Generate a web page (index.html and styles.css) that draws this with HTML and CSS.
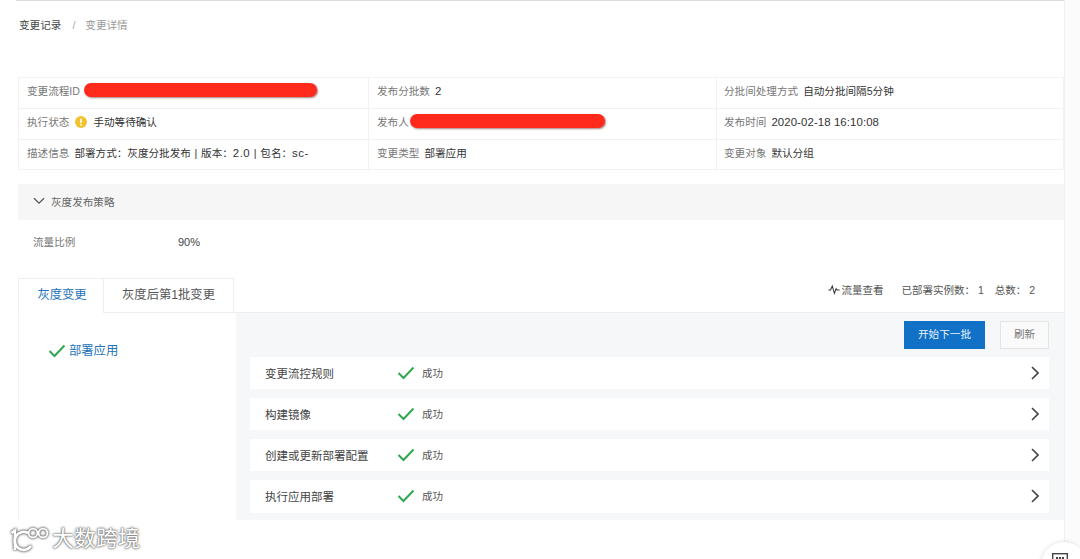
FILE: index.html
```html
<!DOCTYPE html>
<html lang="zh-CN">
<head>
<meta charset="utf-8">
<title>变更详情</title>
<link rel="stylesheet" href="styles.css">
</head>
<body>
<main class="page">
  <nav class="crumbs"><span class="crumb-link">变更记录</span><span class="crumb-sep">/</span><span class="crumb-current">变更详情</span></nav>
  <section class="info">
    <div class="cell"><span class="label">变更流程ID</span><span class="redact redact-id"></span></div>
    <div class="cell"><span class="label">发布分批数</span><span class="value num">2</span></div>
    <div class="cell"><span class="label">分批间处理方式</span><span class="value">自动分批间隔5分钟</span></div>
    <div class="cell"><span class="label">执行状态</span><svg class="warn" viewBox="0 0 12 12"><circle cx="6" cy="6" r="6" fill="#f2c230"/><rect x="5.2" y="2.6" width="1.6" height="4.4" fill="#fff"/><rect x="5.2" y="8" width="1.6" height="1.6" fill="#fff"/></svg><span class="value">手动等待确认</span></div>
    <div class="cell"><span class="label">发布人</span><span class="redact redact-user"></span></div>
    <div class="cell"><span class="label">发布时间</span><span class="value num">2020-02-18 16:10:08</span></div>
    <div class="cell"><span class="label">描述信息</span><span class="value desc">部署方式：灰度分批发布 | 版本：<span class="ver">2.0</span> | 包名：<span class="ver">sc-</span></span></div>
    <div class="cell"><span class="label">变更类型</span><span class="value">部署应用</span></div>
    <div class="cell"><span class="label">变更对象</span><span class="value">默认分组</span></div>
  </section>
  <section class="strategy">
    <header class="strategy-head"><svg class="chev-down" viewBox="0 0 12 8"><path d="M1 1.2 6 6.2 11 1.2" fill="none" stroke="#555" stroke-width="1.3"/></svg><span>灰度发布策略</span></header>
    <div class="strategy-row"><span class="strategy-label">流量比例</span><span class="strategy-value">90%</span></div>
  </section>
  <section class="changes">
    <div class="tabbar">
      <div class="tab tab-active">灰度变更</div>
      <div class="tab tab-second">灰度后第1批变更</div>
      <div class="stats">
        <svg class="pulse" viewBox="0 0 14 12"><path d="M0.5 6.5H3L5 2 7.5 10.5 9.5 5 10.5 6.5H13.5" fill="none" stroke="#333" stroke-width="1.2"/></svg>
        <span class="traffic">流量查看</span>
        <span class="stat">已部署实例数：&nbsp;1</span>
        <span class="stat">总数：&nbsp;2</span>
      </div>
    </div>
    <div class="body">
      <aside class="steps">
        <svg class="check check-step" viewBox="0 0 18 14"><path d="M1.5 7 6.5 12 16.5 1.5" fill="none" stroke="#2fa84f" stroke-width="2"/></svg>
        <span class="step-name">部署应用</span>
      </aside>
      <div class="detail">
        <div class="actions"><button class="btn-primary">开始下一批</button><button class="btn-plain">刷新</button></div>
        <div class="task"><span class="task-name">变更流控规则</span><svg class="check" viewBox="0 0 18 14"><path d="M1.5 7 6.5 12 16.5 1.5" fill="none" stroke="#2fa84f" stroke-width="2"/></svg><span class="task-status">成功</span><svg class="chev" viewBox="0 0 8 14"><path d="M1 1 7 7 1 13" fill="none" stroke="#444" stroke-width="1.6"/></svg></div>
        <div class="task"><span class="task-name">构建镜像</span><svg class="check" viewBox="0 0 18 14"><path d="M1.5 7 6.5 12 16.5 1.5" fill="none" stroke="#2fa84f" stroke-width="2"/></svg><span class="task-status">成功</span><svg class="chev" viewBox="0 0 8 14"><path d="M1 1 7 7 1 13" fill="none" stroke="#444" stroke-width="1.6"/></svg></div>
        <div class="task"><span class="task-name">创建或更新部署配置</span><svg class="check" viewBox="0 0 18 14"><path d="M1.5 7 6.5 12 16.5 1.5" fill="none" stroke="#2fa84f" stroke-width="2"/></svg><span class="task-status">成功</span><svg class="chev" viewBox="0 0 8 14"><path d="M1 1 7 7 1 13" fill="none" stroke="#444" stroke-width="1.6"/></svg></div>
        <div class="task task-last"><span class="task-name">执行应用部署</span><svg class="check" viewBox="0 0 18 14"><path d="M1.5 7 6.5 12 16.5 1.5" fill="none" stroke="#2fa84f" stroke-width="2"/></svg><span class="task-status">成功</span><svg class="chev" viewBox="0 0 8 14"><path d="M1 1 7 7 1 13" fill="none" stroke="#444" stroke-width="1.6"/></svg></div>
      </div>
    </div>
  </section>
</main>
<div class="edge"></div>
<div class="watermark">
  <svg class="wm-logo" viewBox="0 0 40 26"><g fill="none" stroke="#fff" stroke-width="2.6"><path d="M2.5 7 6 4.5V24"/><path d="M22 20A9 9 0 1 1 19 7"/></g><g fill="#fff" stroke="#fff" stroke-width="1.8" fill-opacity="0"><circle cx="24" cy="7" r="4.4"/><circle cx="34" cy="7" r="4.4"/></g></svg>
  <span>大数跨境</span>
</div>
<div class="chat-clip"><div class="chat"><svg class="chat-icon" viewBox="0 0 16 12"><rect x="0.7" y="0.7" width="14.6" height="14" fill="#fff" stroke="#444" stroke-width="1.4"/><rect x="4" y="4" width="2" height="2" fill="#444"/><rect x="7" y="4" width="2" height="2" fill="#444"/><rect x="10" y="4" width="2" height="2" fill="#444"/></svg></div></div>
</body>
</html>
```
FILE: styles.css
```css
* { box-sizing: border-box; }
html, body { margin: 0; height: 559px; overflow: hidden; background: #fff; }
body {
  position: relative;
  font-family: "Liberation Sans", "Noto Sans CJK SC", sans-serif;
  font-size: 10.6px;
  color: #333;
}
.page {
  width: 1064px;
  padding-left: 18px;
  height: 559px;
  overflow: hidden;
  display: flex;
  flex-direction: column;
}
.page::before {
  content: "";
  display: block;
  flex: none;
  height: 1px;
  margin-left: -2px;
  background: #dcdcdc;
}
.crumbs { margin-top: 17px; height: 14px; line-height: 14px; display: flex; padding-left: 1px; }
.crumb-link { color: #444; }
.crumb-sep { margin: 0 10px 0 11px; color: #aaa; }
.crumb-current { color: #999; }
.info {
  margin-top: 45px;
  display: grid;
  grid-template-columns: 350px 348px 348px;
  grid-auto-rows: 31px;
  border: 1px solid #f2f2f2;
  height: 93px;
  width: 1046px;
  flex: none;
}
.cell {
  display: flex;
  align-items: center;
  padding: 0 0 6px 8px;
  border-right: 1px solid #f2f2f2;
  border-bottom: 1px solid #eff1f3;
  white-space: nowrap;
}
.cell:nth-child(3n) { border-right: 0; padding-left: 7px; }
.cell:nth-child(n+7) { border-bottom-color: transparent; }
.label { color: #777; margin-right: 5px; }
.value { color: #333; }
.desc { word-spacing: .75px; }
.num { font-size: 11.4px; letter-spacing: .1px; margin-top: 2px; }
.ver { font-size: 11.4px; letter-spacing: .5px; }
.warn { width: 12px; height: 12px; margin: 2px 6px 0 1px; }
.redact {
  display: block;
  height: 14px;
  background: #ff2a1c;
  border-radius: 7px;
  box-shadow: 1px 1px 2px rgba(90,30,20,.55);
}
.redact-id { width: 233px; margin-left: -1px; }
.redact-user { width: 195px; margin-left: -4px; }
.strategy { margin-top: 14px; width: 1046px; flex: none; }
.strategy-head {
  height: 36px;
  background: #f6f6f6;
  display: flex;
  align-items: center;
  padding: 0 0 2px 15px;
  color: #666;
}
.chev-down { width: 12px; height: 8px; margin-right: 6px; }
.strategy-row { margin-top: 15px; padding-left: 15px; height: 14px; line-height: 14px; display: flex; }
.strategy-label { width: 145px; color: #777; }
.strategy-value { color: #444; font-size: 11px; }
.changes { margin-top: 29px; width: 1046px; flex: none; }
.tabbar { height: 35px; display: flex; border-bottom: 1px solid #eceef0; }
.tab {
  height: 35px;
  display: flex;
  align-items: center;
  justify-content: center;
  padding-bottom: 4px;
  font-size: 12.3px;
  border: 1px solid #eeeeee;
  border-bottom: 0;
}
.tab-active { width: 85px; color: #2272b9; background: #fff; border-right: 0; padding-left: 2px; }
.tab-second { width: 131px; color: #555; }
.stats { margin-left: auto; display: flex; align-items: center; padding: 0 29px 12px 0; color: #555; font-size: 10.5px; }
.pulse { width: 12px; height: 11px; margin-right: 1px; }
.traffic { margin-right: 18px; }
.stat { margin-right: 11px; }
.stat:last-child { margin-right: 0; }
.body { display: flex; height: 207px; }
.steps {
  width: 218px;
  display: flex;
  align-items: flex-start;
  padding: 31px 0 0 29px;
  border-left: 1px solid #f2f2f2;
  color: #2272b9;
  font-size: 12.3px;
}
.step-name { line-height: 14px; }
.check-step { margin: 0 3px 0 0; }
.detail { flex: 1; background: #f6f7f9; padding: 8px 15px 0 14px; }
.actions { display: flex; justify-content: flex-end; gap: 15px; height: 28px; margin-bottom: 8px; }
.actions button { font: inherit; padding: 0 0 4px; height: 28px; }
.btn-primary { width: 81px; background: #1171c6; color: #e9f2fb; border: 0; }
.btn-plain { width: 49px; background: #fafafa; color: #777; border: 1px solid #e4e4e4; }
.task {
  height: 32px;
  margin-bottom: 9px;
  background: #fff;
  display: flex;
  align-items: center;
  padding: 0 10px 0 15px;
  color: #444;
}
.task-last { height: 33px; margin-bottom: 0; padding-bottom: 1px; }
.task-name { width: 132px; font-size: 11.5px; }
.check { width: 18px; height: 14px; flex: none; }
.task-status { margin: 0 0 2px 7px; color: #555; font-size: 10.5px; }
.chev { width: 8px; height: 14px; margin-left: auto; }
.edge {
  position: absolute;
  left: 1064px;
  top: 0;
  width: 16px;
  height: 543px;
  background: #fbfbfc;
  border-left: 1px solid #f0f0f0;
}
.watermark {
  position: absolute;
  left: 9px;
  top: 524px;
  display: flex;
  align-items: center;
  gap: 3px;
  color: #fff;
  font-size: 22px;
  line-height: 30px;
  text-shadow: 0 0 2px #666, 0 0 1px #666, 0 0 3px #999;
}
.wm-logo { width: 40px; height: 26px; filter: drop-shadow(0 0 1px #555) drop-shadow(0 0 1px #999); }
.chat-clip {
  position: absolute;
  left: 1036px;
  top: 538px;
  width: 44px;
  height: 21px;
  overflow: hidden;
}
.chat {
  width: 46px;
  height: 46px;
  margin: 4px 0 0 5px;
  border-radius: 50%;
  background: #fff;
  box-shadow: 0 0 4px rgba(0,0,0,.15);
  display: flex;
  justify-content: center;
  padding-top: 11px;
}
.chat-icon { width: 16px; height: 12px; margin-left: -8px; }
```
